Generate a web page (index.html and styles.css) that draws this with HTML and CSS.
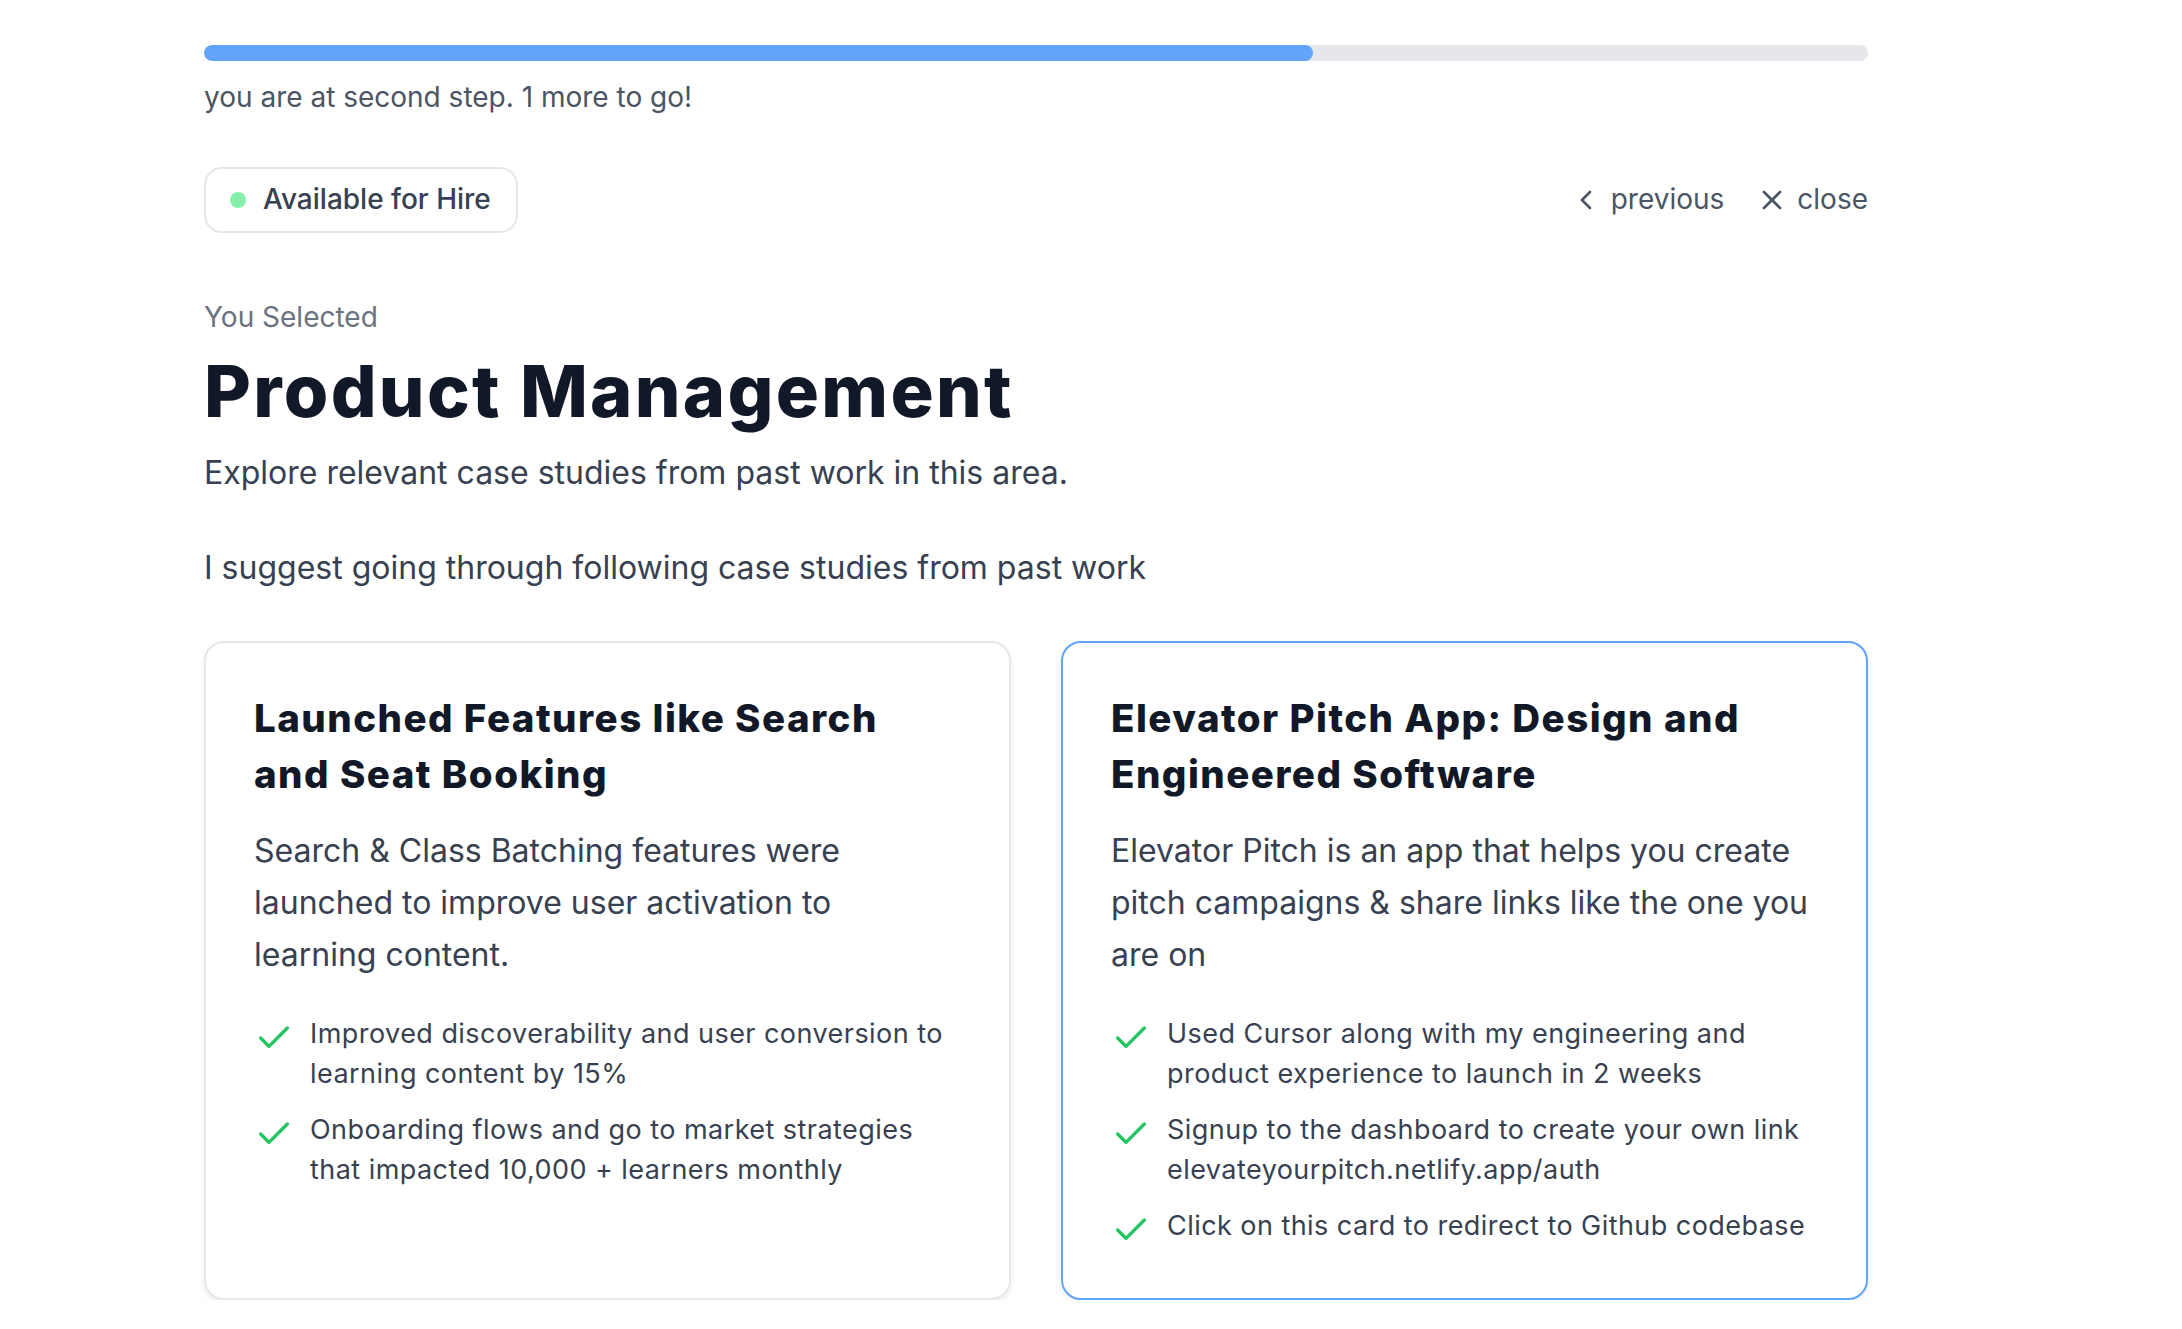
FILE: index.html
```html
<!DOCTYPE html>
<html lang="en">
<head>
<meta charset="utf-8">
<title>Product Management</title>
<link rel="stylesheet" href="styles.css">
</head>
<body>
<main class="page">
  <div class="progress"><div class="progress-fill" style="width: 66.67%"></div></div>
  <p class="progress-text">you are at second step. 1 more to go!</p>

  <div class="topbar">
    <div class="pill"><span class="dot"></span><span class="pill-text">Available for Hire</span></div>
    <nav class="nav">
      <a class="nav-btn" href="#">
        <svg class="nav-icon" viewBox="0 0 24 24" fill="none" stroke="currentColor" stroke-width="2" stroke-linecap="round" stroke-linejoin="round"><path d="m15 18-6-6 6-6"/></svg>
        <span>previous</span>
      </a>
      <a class="nav-btn" href="#">
        <svg class="nav-icon" viewBox="0 0 24 24" fill="none" stroke="currentColor" stroke-width="2" stroke-linecap="round" stroke-linejoin="round"><path d="M18 6 6 18"/><path d="m6 6 12 12"/></svg>
        <span>close</span>
      </a>
    </nav>
  </div>

  <p class="eyebrow">You Selected</p>
  <h1 class="title">Product Management</h1>
  <p class="lead">Explore relevant case studies from past work in this area.</p>
  <p class="suggest">I suggest going through following case studies from past work</p>

  <section class="cards">
    <article class="card">
      <h2 class="card-title">Launched Features like Search and Seat Booking</h2>
      <p class="card-text">Search &amp; Class Batching features were launched to improve user activation to learning content.</p>
      <ul class="points">
        <li class="point">
          <svg class="check" viewBox="0 0 24 24" fill="none" stroke="currentColor" stroke-width="2" stroke-linecap="round" stroke-linejoin="round"><path d="M20 6 9 17l-5-5"/></svg>
          <span>Improved discoverability and user conversion to learning content by 15%</span>
        </li>
        <li class="point">
          <svg class="check" viewBox="0 0 24 24" fill="none" stroke="currentColor" stroke-width="2" stroke-linecap="round" stroke-linejoin="round"><path d="M20 6 9 17l-5-5"/></svg>
          <span>Onboarding flows and go to market strategies that impacted 10,000 + learners monthly</span>
        </li>
      </ul>
    </article>
    <article class="card card-active">
      <h2 class="card-title">Elevator Pitch App: Design and Engineered Software</h2>
      <p class="card-text">Elevator Pitch is an app that helps you create pitch campaigns &amp; share links like the one you are on</p>
      <ul class="points">
        <li class="point">
          <svg class="check" viewBox="0 0 24 24" fill="none" stroke="currentColor" stroke-width="2" stroke-linecap="round" stroke-linejoin="round"><path d="M20 6 9 17l-5-5"/></svg>
          <span>Used Cursor along with my engineering and product experience to launch in 2 weeks</span>
        </li>
        <li class="point">
          <svg class="check" viewBox="0 0 24 24" fill="none" stroke="currentColor" stroke-width="2" stroke-linecap="round" stroke-linejoin="round"><path d="M20 6 9 17l-5-5"/></svg>
          <span>Signup to the dashboard to create your own link elevateyourpitch.netlify.app/auth</span>
        </li>
        <li class="point">
          <svg class="check" viewBox="0 0 24 24" fill="none" stroke="currentColor" stroke-width="2" stroke-linecap="round" stroke-linejoin="round"><path d="M20 6 9 17l-5-5"/></svg>
          <span>Click on this card to redirect to Github codebase</span>
        </li>
      </ul>
    </article>
  </section>
</main>
</body>
</html>
```

FILE: styles.css
```css
* { box-sizing: border-box; }

html, body {
  margin: 0;
  padding: 0;
  background: #ffffff;
}

body {
  font-family: Inter, "Noto Sans", "Liberation Sans", sans-serif;
  color: #374151;
}

.page {
  width: 1664px;
  margin-left: 204px;
  padding-top: 45px;
}

.progress {
  height: 16px;
  border-radius: 9999px;
  background: #e5e7eb;
  overflow: hidden;
}

.progress-fill {
  height: 100%;
  border-radius: 9999px;
  background: #60a5fa;
}

.progress-text {
  margin: 14px 0 0;
  font-size: 28px;
  line-height: 44.8px;
  color: #4b5563;
}

.topbar {
  margin-top: 47px;
  display: flex;
  align-items: center;
  justify-content: space-between;
}

.pill {
  display: inline-flex;
  align-items: center;
  gap: 17px;
  padding: 8.6px 25px 8.6px 24px;
  border: 2px solid #e5e7eb;
  border-radius: 18px;
  background: #fff;
}

.dot {
  width: 16px;
  height: 16px;
  border-radius: 50%;
  background: #86efac;
}

.pill-text {
  font-size: 28px;
  line-height: 44.8px;
  font-weight: 500;
  color: #374151;
}

.nav {
  display: flex;
  align-items: center;
  gap: 32px;
}

.nav-btn {
  display: flex;
  align-items: center;
  gap: 9px;
  color: #4b5563;
  text-decoration: none;
  font-size: 28px;
  line-height: 44.8px;
}

.nav-icon {
  width: 32px;
  height: 32px;
  display: block;
}

.eyebrow {
  margin: 62px 0 0;
  font-size: 28px;
  line-height: 44.8px;
  color: #6b7280;
}

.title {
  margin: 11px 0 0;
  font-size: 72px;
  line-height: 80px;
  font-weight: 800;
  letter-spacing: 2.3px;
  color: #111827;
}

.lead {
  margin: 20px 0 0;
  font-size: 32px;
  line-height: 44.8px;
  color: #374151;
}

.suggest {
  margin: 51px 0 0;
  font-size: 32px;
  line-height: 44.8px;
  color: #374151;
}

.cards {
  margin-top: 50px;
  display: grid;
  grid-template-columns: 1fr 1fr;
  gap: 50px;
}

.card {
  border: 2px solid #e5e7eb;
  border-radius: 20px;
  padding: 47px 48px 48px;
  background: #fff;
  box-shadow: 0 3px 6px rgba(17, 24, 39, 0.08);
}

.card-active {
  border-color: #60a5fa;
}

.card-title {
  margin: 0;
  max-width: 680px;
  font-size: 38.5px;
  line-height: 56px;
  font-weight: 800;
  letter-spacing: 1.45px;
  color: #111827;
}

.card-text {
  margin: 23px 0 0;
  font-size: 32px;
  line-height: 52px;
  color: #374151;
}

.points {
  list-style: none;
  margin: 33px 0 0;
  padding: 0;
  display: flex;
  flex-direction: column;
  gap: 17px;
}

.point {
  display: flex;
  align-items: flex-start;
  gap: 16px;
  font-size: 27px;
  line-height: 39.5px;
  letter-spacing: 0.45px;
  color: #374151;
}

.check {
  flex: none;
  width: 40px;
  height: 40px;
  margin-top: 4px;
  color: #22c55e;
}
```
